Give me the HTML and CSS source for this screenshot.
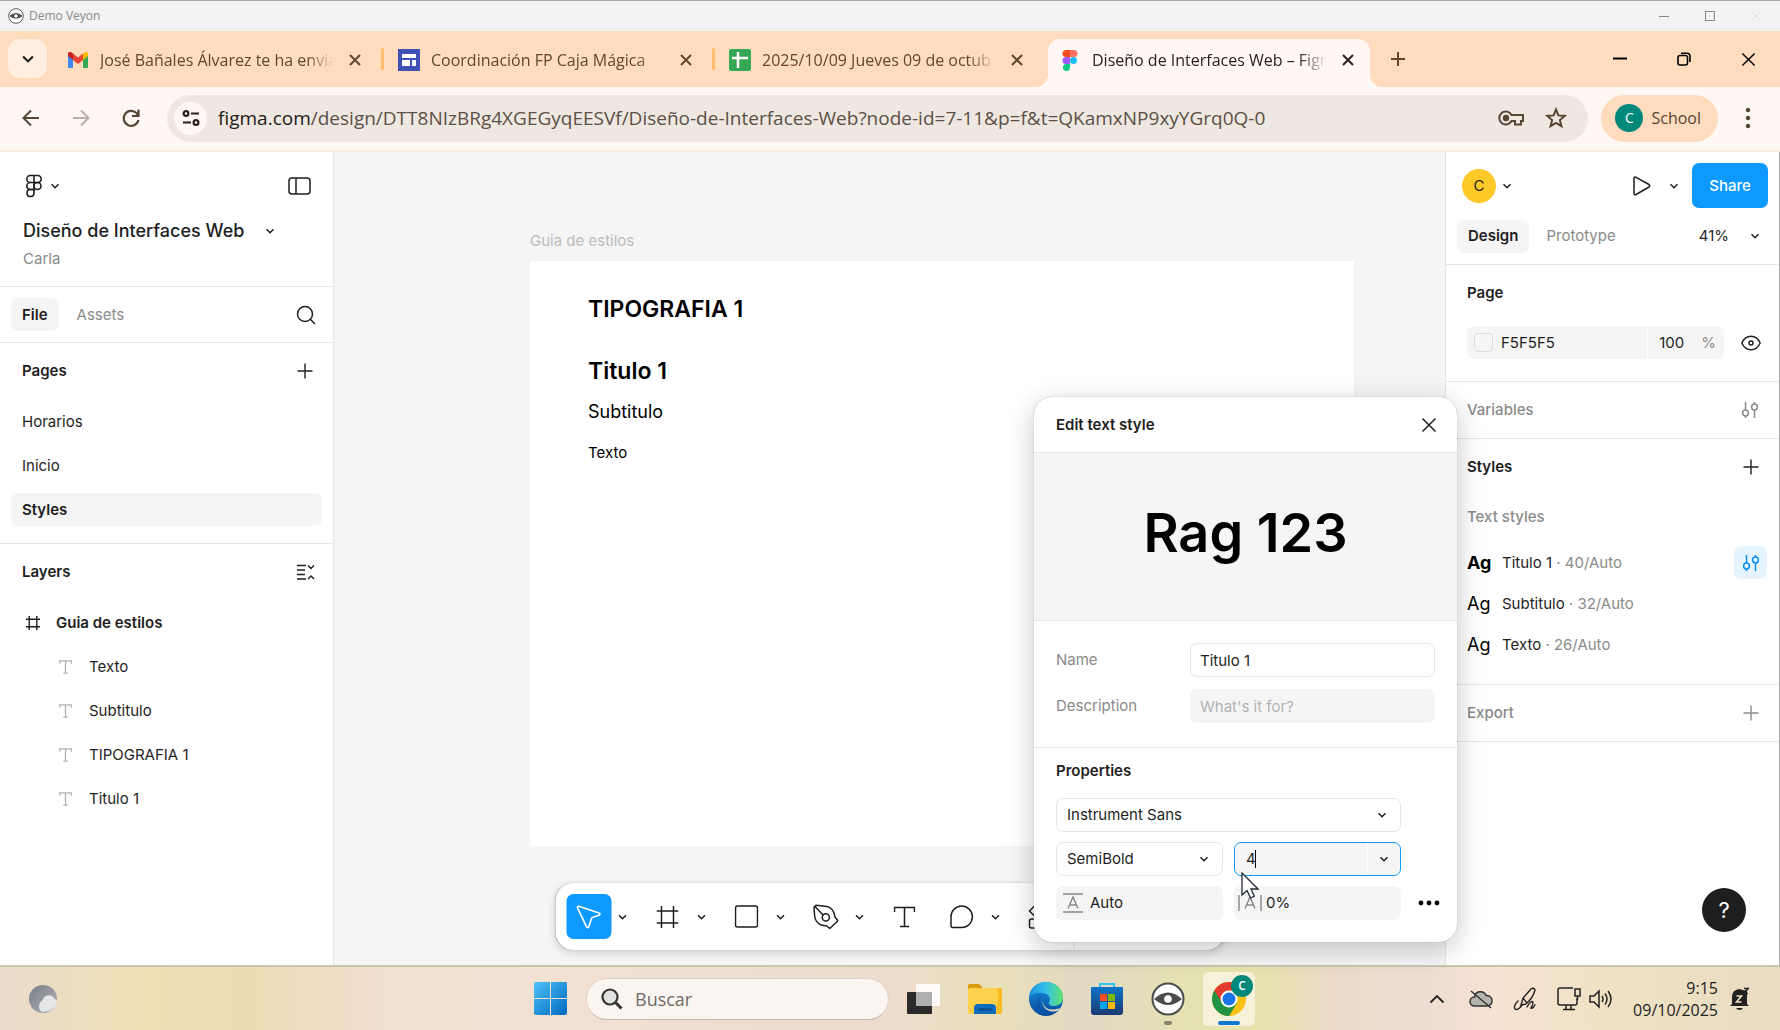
FILE: index.html
```html
<!DOCTYPE html>
<html lang="es">
<head>
<meta charset="utf-8">
<meta name="viewport" content="width=device-width, initial-scale=1">
<title>Diseño de Interfaces Web – Figma</title>
<link rel="stylesheet" href="styles.css">
</head>
<body>
<svg class="defs" aria-hidden="true">
  <symbol id="chev" viewBox="0 0 10 10"><path d="M1.5 3.2 5 6.7 8.500 3.200" fill="none" stroke="currentColor" stroke-width="1.500"/></symbol>
  <symbol id="close" viewBox="0 0 12 12"><path d="M1 1 11 11M11 1 1 11" fill="none" stroke="currentColor" stroke-width="2"/></symbol>
  <symbol id="thinx" viewBox="0 0 16 16"><path d="M1.500 1.500 14.500 14.500M14.500 1.500 1.500 14.500" fill="none" stroke="currentColor" stroke-width="1.500"/></symbol>
  <symbol id="plus" viewBox="0 0 16 16"><path d="M8 .5v15M.5 8h15" fill="none" stroke="currentColor" stroke-width="1.400"/></symbol>
  <symbol id="layer-t" viewBox="0 0 13 14"><path d="M.7 3.500V.8h11.600v2.700M6.500.8v12.400M4.300 13.200h4.400" fill="none" stroke="currentColor" stroke-width="1.300"/></symbol>
  <symbol id="sliders" viewBox="0 0 18 18"><g fill="none" stroke="currentColor" stroke-width="1.500"><path d="M4.500 1v8M4.500 15v2M13.500 1v2M13.500 9v8"/><circle cx="4.500" cy="12" r="2.900"/><circle cx="13.500" cy="6" r="2.900"/></g></symbol>
  <symbol id="frame" viewBox="0 0 22 22"><path d="M5 0v22M17 0v22M0 5h22M0 17h22" fill="none" stroke="currentColor" stroke-width="1.500"/></symbol>
  <symbol id="veyon" viewBox="0 0 34 34"><circle cx="17" cy="17" r="15.500" fill="#fff" stroke="#4b4b4b" stroke-width="2"/><path d="M3 17q14-13 28 0q-14 12-28 0z" fill="#4b4b4b"/><circle cx="17" cy="17" r="3.800" fill="#fff"/></symbol>
</svg>

<header class="titlebar">
  <svg class="app-mark" viewBox="0 0 34 34"><use href="#veyon"/></svg>
  <span class="app-name">Demo Veyon</span>
  <div class="title-controls">
    <button aria-label="Minimizar"><svg width="10" height="10"><path d="M0 5.500h10" stroke="#888"/></svg></button>
    <button aria-label="Maximizar"><svg width="10" height="10"><rect x=".5" y=".5" width="9" height="9" fill="none" stroke="#888"/></svg></button>
    <button class="dim" aria-label="Cerrar"><svg width="10" height="10"><path d="M0 0 10 10M10 0 0 10" stroke="#ddd"/></svg></button>
  </div>
</header>

<nav class="tabstrip" aria-label="Pestañas">
  <button class="tab-search" aria-label="Buscar pestañas"><svg width="14" height="14" viewBox="0 0 10 10"><use href="#chev"/></svg></button>
  <div class="tab">
    <svg class="favicon" viewBox="0 0 22 22"><path d="M1 5v13a1 1 0 0 0 1 1h4V9z" fill="#4285f4"/><path d="M21 5v13a1 1 0 0 1-1 1h-4V9z" fill="#34a853"/><path d="M16 5v6l5-4V5c0-2-2-2.500-3.500-1.500z" fill="#fbbc04"/><path d="M6 4.500 11 8.500 16 4.500V11l-5 4-5-4z" fill="#ea4335"/><path d="M1 5v2l5 4V4.500L4.500 3.500C3 2.500 1 3 1 5z" fill="#c5221f"/></svg>
    <span class="tab-title">José Bañales Álvarez te ha envia</span>
    <button class="tab-close" aria-label="Cerrar pestaña"><svg width="12" height="12"><use href="#close"/></svg></button>
  </div>
  <div class="tab">
    <svg class="favicon" viewBox="0 0 22 22"><path d="M0 0h22v22H0z" fill="#3f51b5"/><path d="M4 5h14v4H4zM4 11h8v6H4zM14 11h4v6h-4z" fill="#fff"/></svg>
    <span class="tab-title">Coordinación FP Caja Mágica</span>
    <button class="tab-close" aria-label="Cerrar pestaña"><svg width="12" height="12"><use href="#close"/></svg></button>
  </div>
  <div class="tab">
    <svg class="favicon" viewBox="0 0 22 22"><rect width="22" height="22" rx="2" fill="#34a853"/><path d="M3 9h16M9 3v16" stroke="#fff" stroke-width="2.600"/></svg>
    <span class="tab-title">2025/10/09 Jueves 09 de octub</span>
    <button class="tab-close" aria-label="Cerrar pestaña"><svg width="12" height="12"><use href="#close"/></svg></button>
  </div>
  <div class="tab active">
    <svg class="favicon" viewBox="0 0 22 22"><path d="M7 1h4v7H7a3.500 3.500 0 0 1 0-7z" fill="#f24e1e"/><path d="M11 1h4a3.500 3.500 0 0 1 0 7h-4z" fill="#ff7262"/><path d="M7 8h4v7H7a3.500 3.500 0 0 1 0-7z" fill="#a259ff"/><circle cx="14.500" cy="11.500" r="3.500" fill="#1abcfe"/><path d="M7 15h4v3.500A3.500 3.500 0 1 1 7 15z" fill="#0acf83"/></svg>
    <span class="tab-title">Diseño de Interfaces Web – Figm</span>
    <button class="tab-close" aria-label="Cerrar pestaña"><svg width="12" height="12"><use href="#close"/></svg></button>
  </div>
  <button class="new-tab" aria-label="Nueva pestaña"><svg width="14" height="14" viewBox="0 0 14 14"><path d="M7 0v14M0 7h14" stroke="currentColor" stroke-width="2"/></svg></button>
  <div class="window-controls">
    <button aria-label="Minimizar"><svg width="14" height="14"><path d="M0 6.500h14" stroke="#000" stroke-width="2"/></svg></button>
    <button aria-label="Restaurar"><svg width="14" height="14" fill="none" stroke="#000" stroke-width="1.600"><rect x="1" y="3.500" width="9.500" height="9.500" rx="2"/><path d="M4 1.200h6a3 3 0 0 1 3 3V10"/></svg></button>
    <button aria-label="Cerrar"><svg width="15" height="15" viewBox="0 0 16 16"><use href="#thinx"/></svg></button>
  </div>
</nav>

<div class="browserbar">
  <button class="nav-btn" aria-label="Atrás"><svg width="20" height="20" fill="none" stroke="currentColor" stroke-width="2"><path d="M18 10H3M10 2.500 2.500 10l7.500 7.500"/></svg></button>
  <button class="nav-btn off" aria-label="Adelante"><svg width="20" height="20" fill="none" stroke="currentColor" stroke-width="2"><path d="M2 10h15M10 2.500l7.500 7.500-7.500 7.500"/></svg></button>
  <button class="nav-btn" aria-label="Recargar"><svg width="20" height="20" fill="none" stroke="currentColor" stroke-width="2.200"><path d="M17.500 12A7.500 7.500 0 1 1 15.500 5L17 7M17.500 1.500V8H11"/></svg></button>
  <div class="omnibox">
    <button class="tune" aria-label="Información del sitio"><svg width="18" height="18" fill="none" stroke="currentColor" stroke-width="2.200"><circle cx="4" cy="4.500" r="2.400"/><path d="M9 4.500h8M1 13.500h8"/><circle cx="14" cy="13.500" r="2.400"/></svg></button>
    <a class="url" href="#"><b>figma.com</b>/design/DTT8NIzBRg4XGEGyqEESVf/Diseño-de-Interfaces-Web?node-id=7-11&amp;p=f&amp;t=QKamxNP9xyYGrq0Q-0</a>
    <button class="omni-btn" aria-label="Contraseñas"><svg width="26" height="16" fill="none" stroke="currentColor" stroke-width="2"><path d="M13.500 5A6.500 6.500 0 1 0 13.500 11H17v3.500h6V11h2V5z"/><circle cx="8" cy="8" r="2.200" fill="currentColor"/></svg></button>
    <button class="omni-btn" aria-label="Añadir a favoritos"><svg width="22" height="22" fill="none" stroke="currentColor" stroke-width="2"><path d="M11 2.500 13.400 8.400l6.400.5-4.900 4.100 1.500 6.200L11 15.900l-5.400 3.300 1.500-6.200-4.900-4.100 6.400-.5z"/></svg></button>
  </div>
  <button class="profile"><span class="profile-dot">C</span>School</button>
  <button class="kebab" aria-label="Menú"><svg width="6" height="22"><circle cx="3" cy="3" r="2.200"/><circle cx="3" cy="11" r="2.200"/><circle cx="3" cy="19" r="2.200"/></svg></button>
</div>

<main class="workspace">
  <aside class="left-panel">
    <section class="file-head">
      <div class="row between">
        <button class="logo-btn" aria-label="Menú principal"><svg width="18" height="24" fill="none" stroke="currentColor" stroke-width="1.600"><path d="M9 1.500H5.300a3.500 3.500 0 0 0 0 7H9zM9 1.500h3.700a3.500 3.500 0 0 1 0 7H9zM9 8.500H5.300a3.500 3.500 0 0 0 0 7H9z"/><circle cx="12.500" cy="12" r="3.500"/><path d="M9 15.500H5.300a3.500 3.500 0 1 0 3.700 3.500z"/></svg><svg width="10" height="10"><use href="#chev"/></svg></button>
        <button aria-label="Ocultar panel"><svg width="24" height="18" fill="none" stroke="currentColor" stroke-width="1.500"><rect x="1" y="1" width="21" height="16" rx="3"/><path d="M8 1v16"/></svg></button>
      </div>
      <h1 class="file-name">Diseño de Interfaces Web <svg width="10" height="10"><use href="#chev"/></svg></h1>
      <p class="muted owner">Carla</p>
    </section>
    <section class="file-tabs">
      <button class="pill on">File</button><button class="pill">Assets</button>
      <button class="push" aria-label="Buscar"><svg width="20" height="20" fill="none" stroke="currentColor" stroke-width="1.500"><circle cx="9" cy="9" r="7.500"/><path d="m14.300 14.300 4.700 4.700"/></svg></button>
    </section>
    <section class="pages">
      <div class="row between section-head"><h2>Pages</h2><button aria-label="Añadir página"><svg width="16" height="16"><use href="#plus"/></svg></button></div>
      <ul class="page-list">
        <li><a href="#">Horarios</a></li>
        <li><a href="#">Inicio</a></li>
        <li><a href="#" class="current">Styles</a></li>
      </ul>
    </section>
    <section class="layers">
      <div class="row between section-head"><h2>Layers</h2><button aria-label="Contraer capas"><svg width="18" height="16" fill="none" stroke="currentColor" stroke-width="1.400"><path d="M0 1.500h9M0 6h8M0 10.500h8M0 15h9M11 1.500l3 3 3-3M11 15l3-3 3 3"/></svg></button></div>
      <ul class="layer-list">
        <li class="root"><svg width="14" height="14" viewBox="0 0 22 22"><path d="M5 0v22M17 0v22M0 5h22M0 17h22" fill="none" stroke="currentColor" stroke-width="2.200"/></svg>Guia de estilos</li>
        <li><svg width="13" height="14"><use href="#layer-t"/></svg>Texto</li>
        <li><svg width="13" height="14"><use href="#layer-t"/></svg>Subtitulo</li>
        <li><svg width="13" height="14"><use href="#layer-t"/></svg>TIPOGRAFIA 1</li>
        <li><svg width="13" height="14"><use href="#layer-t"/></svg>Titulo 1</li>
      </ul>
    </section>
  </aside>

  <section class="canvas" aria-label="Lienzo">
    <span class="frame-label">Guia de estilos</span>
    <article class="artboard">
      <p class="t-tipografia">TIPOGRAFIA 1</p>
      <p class="t-titulo">Titulo 1</p>
      <p class="t-subtitulo">Subtitulo</p>
      <p class="t-texto">Texto</p>
    </article>
    <div class="toolbar" role="toolbar">
      <button class="tool active" aria-label="Mover"><svg width="26" height="26" fill="none" stroke="currentColor" stroke-width="1.600" stroke-linejoin="round"><path d="M3.400 2.200 23.500 9q2 1 0 2.200L17.500 13.300q-1.200.4-1.700 1.600l-2.600 8q-.9 1.700-2 .2L1.900 3.700q-.2-1.600 1.500-1.500z"/></svg></button>
      <button class="more" aria-label="Más"><svg width="10" height="10"><use href="#chev"/></svg></button>
      <button class="tool" aria-label="Marco"><svg width="22" height="22"><use href="#frame"/></svg></button>
      <button class="more" aria-label="Más"><svg width="10" height="10"><use href="#chev"/></svg></button>
      <button class="tool" aria-label="Rectángulo"><svg width="24" height="24"><rect x="1" y="1" width="22" height="21" rx="2" fill="none" stroke="currentColor" stroke-width="1.500"/></svg></button>
      <button class="more" aria-label="Más"><svg width="10" height="10"><use href="#chev"/></svg></button>
      <button class="tool" aria-label="Pluma"><svg width="26" height="26" fill="none" stroke="currentColor" stroke-width="1.500" stroke-linejoin="round"><path d="M1.500 3 3.500 1.200 14.500 2.500q5 1.200 7 6.500L22.500 13l3 3.700-8.300 7.800-3-2.500-5.700-1Q3 18.500 2.200 12.500zM2 2l9 9.500"/><circle cx="13.300" cy="13.300" r="3.600"/></svg></button>
      <button class="more" aria-label="Más"><svg width="10" height="10"><use href="#chev"/></svg></button>
      <button class="tool text" aria-label="Texto"><svg width="22" height="22" fill="none" stroke="currentColor" stroke-width="1.500"><path d="M1 6V1.500h20V6M11 1.500v19M6.500 20.500h9"/></svg></button>
      <button class="tool" aria-label="Comentario"><svg width="24" height="24" fill="none" stroke="currentColor" stroke-width="1.500"><path d="M1.500 12A10.700 10.700 0 1 1 12 22.500H3.500a2 2 0 0 1-2-2z"/></svg></button>
      <button class="more" aria-label="Más"><svg width="10" height="10"><use href="#chev"/></svg></button>
      <button class="tool" aria-label="Acciones"><svg width="26" height="26" fill="none" stroke="currentColor" stroke-width="1.500"><path d="M2 7 7 2l5 5-5 5z"/><rect x="2" y="15" width="9" height="9" rx="2"/><rect x="15" y="15" width="9" height="9" rx="2"/><rect x="15" y="3" width="9" height="9" rx="2"/></svg></button>
      <span class="tool-divider"></span>
    </div>
  </section>

  <aside class="right-panel">
    <div class="share-row">
      <button class="avatar-btn"><span class="avatar">C</span><svg width="10" height="10"><use href="#chev"/></svg></button>
      <button class="push" aria-label="Presentar"><svg width="18" height="20" fill="none" stroke="currentColor" stroke-width="1.500" stroke-linejoin="round"><path d="M1 2.500q0-2 2-1.200l13 7.200q1.500 1.300 0 2.500l-13 7.500q-2 .8-2-1.200z"/></svg></button>
      <button class="play-more" aria-label="Opciones"><svg width="10" height="10"><use href="#chev"/></svg></button>
      <button class="share">Share</button>
    </div>
    <div class="mode-row">
      <button class="pill on">Design</button><button class="pill">Prototype</button>
      <button class="push zoom">41%<svg width="10" height="10"><use href="#chev"/></svg></button>
    </div>
    <section class="page-props">
      <h2>Page</h2>
      <div class="row between">
        <div class="color-field">
          <span class="swatch"></span>
          <input class="hex" aria-label="Color" value="F5F5F5">
          <input class="opacity" aria-label="Opacidad" value="100"><span class="muted percent">%</span>
        </div>
        <button aria-label="Visibilidad"><svg width="20" height="16" fill="none" stroke="currentColor" stroke-width="1.500"><path d="M.8 8Q4 1.200 10 1.200T19.200 8Q16 14.800 10 14.800T.8 8z"/><circle cx="10" cy="8" r="2"/></svg></button>
      </div>
    </section>
    <section class="single muted"><h2>Variables</h2><button aria-label="Variables"><svg width="18" height="18"><use href="#sliders"/></svg></button></section>
    <section class="styles">
      <div class="single"><h2>Styles</h2><button aria-label="Añadir estilo"><svg width="16" height="16"><use href="#plus"/></svg></button></div>
      <h3 class="muted">Text styles</h3>
      <ul>
        <li><span class="ag bold">Ag</span><span>Titulo 1 <i>· 40/Auto</i></span><button class="edit" aria-label="Editar estilo"><svg width="18" height="18"><use href="#sliders"/></svg></button></li>
        <li><span class="ag">Ag</span><span>Subtitulo <i>· 32/Auto</i></span></li>
        <li><span class="ag">Ag</span><span>Texto <i>· 26/Auto</i></span></li>
      </ul>
    </section>
    <section class="single muted export"><h2>Export</h2><button aria-label="Añadir exportación"><svg width="16" height="16"><use href="#plus"/></svg></button></section>
    <button class="help" aria-label="Ayuda">?</button>
  </aside>

  <form class="dialog" role="dialog" aria-label="Edit text style">
    <header class="dialog-head"><h2>Edit text style</h2><button type="button" aria-label="Cerrar"><svg width="16" height="16"><use href="#thinx"/></svg></button></header>
    <div class="preview">Rag 123</div>
    <div class="dialog-fields">
      <label for="style-name">Name</label><input id="style-name" value="Titulo 1">
      <label for="style-desc">Description</label><input id="style-desc" class="filled" placeholder="What's it for?">
    </div>
    <div class="dialog-props">
      <h2>Properties</h2>
      <div class="select wide"><select aria-label="Fuente"><option>Instrument Sans</option></select><svg width="10" height="10"><use href="#chev"/></svg></div>
      <div class="select"><select aria-label="Grosor"><option>SemiBold</option></select><svg width="10" height="10"><use href="#chev"/></svg></div>
      <div class="size-field"><input aria-label="Tamaño" value="4"><span class="caret"></span><button type="button" aria-label="Tamaños"><svg width="10" height="10"><use href="#chev"/></svg></button></div>
      <label class="metric leading"><svg width="20" height="20" fill="none" stroke="#888" stroke-width="1.400"><path d="M0 1h20M0 19h20M5 15.500 10 4l5 11.500M6.700 12h6.600"/></svg><input aria-label="Interlineado" value="Auto"></label>
      <label class="metric tight"><svg width="24" height="18" fill="none" stroke="#888" stroke-width="1.400"><path d="M1 1v16M23 1v16M7 14.500 12 3l5 11.500M8.700 11h6.600"/></svg><input aria-label="Espaciado" value="0%"></label>
      <button class="dots" type="button" aria-label="Más opciones"><svg width="22" height="6"><circle cx="3" cy="3" r="2.400"/><circle cx="11" cy="3" r="2.400"/><circle cx="19" cy="3" r="2.400"/></svg></button>
    </div>
    <svg class="cursor" width="18" height="28" viewBox="0 0 18 28"><path d="M1 1v22l5-4.500 3.500 7.500 3.800-1.800-3.300-7.200h7z" fill="#fff" stroke="#222a3a" stroke-width="1.300"/></svg>
  </form>
</main>

<footer class="taskbar">
  <button class="weather" aria-label="El tiempo"><svg width="30" height="30"><defs><linearGradient id="moon" x1="0" y1="0" x2="1" y2="1"><stop stop-color="#777c84"/><stop offset="1" stop-color="#b3b6ba"/></linearGradient></defs><circle cx="15" cy="15" r="14" fill="url(#moon)"/><path d="M14 28a7 7 0 0 1 1-12 6 6 0 0 1 10-3l4 4q-1 10-15 11z" fill="#e6e6e6"/></svg></button>
  <div class="apps">
    <button class="app" aria-label="Inicio"><svg width="34" height="34"><defs><linearGradient id="win" x1="0" y1="0" x2="1" y2="1"><stop stop-color="#4fc3f7"/><stop offset="1" stop-color="#0067c0"/></linearGradient></defs><path d="M0 2q0-2 2-2h14v16H0zM17 0h15q1 0 1 2v14H17zM0 17h16v16H2q-2 0-2-2zM17 17h16v14q0 2-2 2H17z" fill="url(#win)"/></svg></button>
    <label class="search"><svg width="22" height="22" fill="none" stroke="#333" stroke-width="2.200"><circle cx="9" cy="9" r="7.500" fill="#e2e2e0"/><path d="m14.500 14.500 6 6" stroke-width="3"/></svg><input placeholder="Buscar" aria-label="Buscar"></label>
    <button class="app" aria-label="Vista de tareas"><svg width="34" height="32"><rect y="9" width="25" height="22" rx="1" fill="#2b2b2b"/><rect x="9" y="1" width="24" height="22" rx="1" fill="#fff" fill-opacity=".86"/><path d="M9 9h16v14H9z" fill="#b0b0b0"/></svg></button>
    <button class="app" aria-label="Explorador"><svg width="34" height="32"><path d="M0 3q0-2 2-2h9l3 3v4H0z" fill="#d99a0e"/><rect y="5" width="34" height="26" rx="2" fill="#ffd04a"/><path d="M30 5h2q2 0 2 2v22q0 2-2 2h-3z" fill="#f9bb20"/><path d="M6 31v-6q0-4 4-4h14q4 0 4 4v6z" fill="#0f6cbd"/><path d="M10 26.500h14" stroke="#0b4a86" stroke-width="2"/></svg></button>
    <button class="app" aria-label="Edge"><svg width="34" height="34"><defs><linearGradient id="ea" x1="0" y1="0" x2="1" y2="0"><stop stop-color="#1b8fe0"/><stop offset=".5" stop-color="#35c1e8"/><stop offset="1" stop-color="#5fe36d"/></linearGradient><linearGradient id="eb" x1="0" y1="0" x2="0" y2="1"><stop stop-color="#1390e0"/><stop offset="1" stop-color="#0c4a9a"/></linearGradient></defs><circle cx="17" cy="17" r="17" fill="url(#eb)"/><path d="M0 15C1 5 9 0 17 0c10 0 17 7 17 15 0 6-4 9-9 9-4 0-6-2-5-4 2-2 1-8-6-9C8 10 3 12 0 15z" fill="url(#ea)"/><path d="M14 18c-1 8 7 12 17 8q-1 2-3 3c-9 2-16-4-14-11z" fill="#ebe0c2"/><path d="M14 12c-5 3-6 15 5 21C8 33 4 20 14 12z" fill="#0a55a8"/></svg></button>
    <button class="app" aria-label="Store"><svg width="34" height="34"><defs><linearGradient id="st" x1="0" y1="0" x2="0" y2="1"><stop stop-color="#0f75c8"/><stop offset="1" stop-color="#1b3a70"/></linearGradient></defs><path d="M10 8V2h14v6" fill="none" stroke="#36c2f0" stroke-width="2"/><path d="M1 5h32v25q0 3-3 3H4q-3 0-3-3z" fill="url(#st)"/><path d="M10 12h7v7h-7z" fill="#f25022"/><path d="M18 12h7v7h-7z" fill="#7fba00"/><path d="M10 20h7v7h-7z" fill="#00a4ef"/><path d="M18 20h7v7h-7z" fill="#ffb900"/></svg></button>
    <button class="app running" aria-label="Veyon"><svg width="34" height="34"><use href="#veyon"/></svg></button>
    <button class="app focused" aria-label="Chrome"><svg width="34" height="34"><circle cx="17" cy="17" r="17" fill="#fbc116"/><path d="M17 17 2.300 8.500A17 17 0 0 0 17 34l8-13z" fill="#229342"/><path d="M2.300 8.500A17 17 0 0 1 31.700 8.500H17l-7 12z" fill="#e33b2e"/><circle cx="17" cy="17" r="8.500" fill="#fff"/><circle cx="17" cy="17" r="6.500" fill="#1a73e8"/></svg><span class="badge">C</span></button>
  </div>
  <div class="tray">
    <button class="overflow" aria-label="Iconos ocultos"><svg width="16" height="10"><path d="M1.500 8.500 8 2l6.500 6.500" fill="none" stroke="currentColor" stroke-width="1.800"/></svg></button>
    <button aria-label="OneDrive"><svg width="24" height="20" fill="none" stroke="#333" stroke-width="1.500"><path d="M5.500 17a4.500 4.500 0 0 1 0-9A6 6 0 0 1 17 6.500a5 5 0 0 1 1.500 10.500z" fill="#b5b5ae"/><path d="M2 2l20 17"/></svg></button>
    <button aria-label="Lápiz"><svg width="24" height="26" fill="none" stroke="#222" stroke-width="1.400" stroke-linecap="round"><path d="M8 19 10 12 18 3q3-2 4 1-2 8-9 14zM10 12l4 5M5 15q-5 5-3 8 3 2 7-4M14 21q4-7 6-5 0 4-2 6 2 1 4-3"/></svg></button>
    <button aria-label="Red"><svg width="24" height="24" fill="none" stroke="#222" stroke-width="1.500"><path d="M16 1H3Q1 1 1 3v13q0 2 2 2h15q2 0 2-2v-5M6 22.500h12M9 18v4M14 18v4M18 2h5v7h-5zM20.500 9v4"/></svg></button>
    <button class="volume" aria-label="Volumen"><svg width="24" height="22" fill="none" stroke="#222" stroke-width="1.500"><path d="M1 8h4l5-5v16l-5-5H1zM13 8q2 3 0 6M16 5.500q4 5.500 0 11M19 3q6 8 0 16"/></svg></button>
    <time class="clock">9:15<br>09/10/2025</time>
    <button class="bell" aria-label="Notificaciones"><svg width="22" height="24"><path d="M2 17V10q0-7 7-8l8 2v13l2 2H0zM6 21h7q-1 2-3.500 2T6 21z" fill="#222"/><path d="M6.500 9h5l-5 6h5" fill="none" stroke="#efe0c4" stroke-width="1.600"/><path d="M14 1.500h4l-4 5h4" fill="none" stroke="#222" stroke-width="1.600"/></svg></button>
  </div>
</footer>
</body>
</html>
```
FILE: styles.css
```css
* { box-sizing: border-box; }

body {
  margin: 0;
  min-height: 100vh;
  display: flex;
  flex-direction: column;
  background: #f5f5f5;
  color: #1e1e1e;
  font: 15px/20px Inter, "Liberation Sans", sans-serif;
}

button, input, select { font: inherit; color: inherit; }
button {
  display: inline-flex;
  align-items: center;
  justify-content: center;
  padding: 0;
  border: 0;
  background: none;
}
input, select { min-width: 0; border: 0; background: none; outline: 0; }
h1, h2, h3, p, ul { margin: 0; padding: 0; font: inherit; }
h2 { font-weight: 600; }
ul { list-style: none; }
a { color: inherit; text-decoration: none; }
svg { display: block; flex: none; }

.defs { position: absolute; width: 0; height: 0; }
.row { display: flex; align-items: center; }
.between { justify-content: space-between; }
.muted { color: #8a8a8a; }
.push { margin-left: auto; }

/* Outer window */
.titlebar {
  display: flex;
  align-items: center;
  height: 31px;
  padding: 0 8px;
  border-top: 1px solid #a9a9a9;
  background: #f3f3f3;
  color: #8a8a8a;
  font: 12px/16px "Open Sans", sans-serif;
}
.app-mark { width: 16px; height: 16px; margin-right: 5px; }
.title-controls { display: flex; margin-left: auto; }
.title-controls button { width: 32px; height: 24px; margin-left: 14px; }
.dim { opacity: .8; }

/* Browser tabs */
.tabstrip {
  display: flex;
  align-items: center;
  height: 56px;
  padding: 8px 0 0 8px;
  background: #ffdcbd;
  color: #60482f;
  font: 16px/24px "Open Sans", sans-serif;
}
.tab-search {
  width: 39px;
  height: 39px;
  margin: 0 6px 9px 0;
  border-radius: 12px;
  background: #ffeee0;
  color: #1e1a17;
}
.tab {
  position: relative;
  display: flex;
  align-items: center;
  flex: 0 1 331px;
  min-width: 0;
  height: 48px;
  padding: 0 19px 6px 14px;
}
.tab + .tab:not(.active)::before {
  content: "";
  position: absolute;
  left: -3px;
  top: 9px;
  width: 3px;
  height: 22px;
  border-radius: 2px;
  background: #ffbb70;
}
.favicon { width: 22px; height: 22px; margin-right: 11px; }
.tab-title {
  flex: 1;
  min-width: 0;
  overflow: hidden;
  white-space: nowrap;
  -webkit-mask-image: linear-gradient(to right, #000 88%, transparent);
  mask-image: linear-gradient(to right, #000 88%, transparent);
}
.tab-close { width: 20px; height: 20px; margin-left: 11px; }
.tab.active {
  margin-left: 2px;
  flex-basis: 322px;
  padding: 0 12px 6px 11px;
  border-radius: 12px 12px 0 0;
  background: #fff7f4;
  color: #292320;
}
.tab.active::before, .tab.active::after {
  content: "";
  position: absolute;
  bottom: 0;
  width: 12px;
  height: 12px;
}
.tab.active::before { left: -12px; background: radial-gradient(circle at 0 0, transparent 12px, #fff7f4 12px); }
.tab.active::after { right: -12px; background: radial-gradient(circle at 100% 0, transparent 12px, #fff7f4 12px); }
.new-tab { width: 32px; height: 32px; margin: 0 0 8px 12px; }
.window-controls { display: flex; margin-left: auto; color: #000; }
.window-controls button { width: 64px; height: 40px; margin-bottom: 8px; }

/* Browser toolbar */
.browserbar {
  display: flex;
  align-items: center;
  height: 65px;
  padding: 0 20px 1px 6px;
  border-bottom: 2px solid #faebe3;
  background: #fff7f4;
  color: #584634;
  font: 19px/24px "Open Sans", sans-serif;
}
.nav-btn { width: 50px; height: 40px; }
.nav-btn.off { color: #b9b0aa; }
.omnibox {
  display: flex;
  align-items: center;
  flex: 1;
  min-width: 0;
  height: 47px;
  margin-left: 11px;
  padding: 0 14px 0 7px;
  border-radius: 24px;
  background: #efe7e2;
}
.tune { width: 33px; height: 33px; border-radius: 50%; background: #fff7f4; color: #29231e; }
.url { flex: 1; min-width: 0; margin-left: 11px; overflow: hidden; white-space: nowrap; color: #5c5047; }
.url b { font-weight: 400; color: #1f1b18; }
.omni-btn { width: 36px; height: 36px; margin-left: 9px; }
.profile {
  gap: 8px;
  height: 47px;
  margin-left: 13px;
  padding: 0 17px 0 14px;
  border-radius: 24px;
  background: #ffdcbd;
  font-size: 16px;
}
.profile-dot, .badge {
  display: grid;
  place-items: center;
  border-radius: 50%;
  background: #00897b;
  color: #fff;
}
.profile-dot { width: 28px; height: 28px; font-size: 14px; }
.kebab { width: 24px; height: 40px; margin-left: 18px; fill: currentColor; }

/* Editor */
.workspace { position: relative; display: flex; flex: 1; min-height: 0; }
.left-panel {
  display: flex;
  flex-direction: column;
  flex: 0 0 334px;
  border-right: 1px solid #e6e6e6;
  background: #fff;
}
.left-panel > section { border-bottom: 1px solid #e6e6e6; }
.left-panel > .layers { border-bottom: 0; }
.file-head { padding: 22px 21px 17px 23px; }
.logo-btn { gap: 7px; padding-left: 2px; }
.file-name {
  display: flex;
  align-items: center;
  gap: 21px;
  margin-top: 20px;
  font-size: 18px;
  font-weight: 500;
  line-height: 26px;
}
.owner { margin-top: 5px; }
.file-tabs { display: flex; align-items: center; gap: 7px; height: 56px; padding: 0 17px 0 11px; }
.pill { height: 33px; padding: 0 11px; border-radius: 7px; color: #8a8a8a; }
.pill.on { background: #f5f5f5; color: #1e1e1e; font-weight: 600; }
.section-head { height: 56px; padding: 0 20px 0 22px; }
.layers .section-head { padding-right: 18px; }
.pages { padding-bottom: 17px; }
.page-list, .layer-list { display: flex; flex-direction: column; gap: 11px; padding: 6px 11px 0; }
.page-list a { display: flex; align-items: center; height: 33px; padding: 0 11px; border-radius: 7px; }
.page-list .current { background: #f5f5f5; font-weight: 600; }
.layer-list li { display: flex; align-items: center; gap: 17px; height: 33px; padding-left: 48px; }
.layer-list li svg { color: #b0b0b0; }
.layer-list .root { gap: 16px; padding-left: 15px; font-weight: 600; }
.layer-list .root svg { color: #1e1e1e; }

/* Canvas: frame and its text layers sit at free coordinates */
.canvas { position: relative; flex: 1; min-width: 0; overflow: hidden; background: #f5f5f5; }
.frame-label { position: absolute; left: 196px; top: 79px; color: #bcbcbc; }
.artboard { position: absolute; left: 196px; top: 109px; width: 824px; height: 585px; background: #fff; color: #000; }
.artboard p { position: absolute; left: 58px; white-space: nowrap; }
.t-tipografia { top: 32px; font-size: 23px; line-height: 32px; font-weight: 600; }
.t-titulo { top: 94px; font-size: 23px; line-height: 32px; font-weight: 600; }
.t-subtitulo { top: 139px; font-size: 18px; line-height: 24px; }
.t-texto { top: 182px; }

.toolbar {
  position: absolute;
  left: 50%;
  bottom: 15px;
  transform: translateX(-50%);
  display: flex;
  align-items: center;
  width: 669px;
  height: 67px;
  padding: 0 11px;
  border-radius: 18px;
  background: #fff;
  box-shadow: 0 0 1px rgba(0, 0, 0, .35), 0 3px 10px rgba(0, 0, 0, .15);
}
.tool { width: 45px; height: 45px; border-radius: 7px; }
.tool.active { background: #0d99ff; color: #fff; }
.more { width: 22px; height: 45px; margin-right: 12px; }
.tool.text { margin-right: 12px; }
.tool-divider { align-self: stretch; width: 1px; margin-left: 10px; background: #e6e6e6; }

/* Inspector */
.right-panel {
  display: flex;
  flex-direction: column;
  flex: 0 0 335px;
  border-left: 1px solid #e6e6e6;
  border-right: 1px solid #b0b0b0;
  background: #fff;
}
.share-row { display: flex; align-items: center; height: 45px; margin: 11px 11px 0 16px; }
.avatar-btn { gap: 6px; }
.avatar { display: grid; place-items: center; width: 34px; height: 34px; border-radius: 50%; background: #ffc928; }
.play-more { width: 24px; height: 24px; margin: 0 6px 0 11px; }
.share { width: 76px; height: 45px; border-radius: 7px; background: #0d99ff; color: #fff; font-weight: 500; }
.mode-row {
  display: flex;
  align-items: center;
  gap: 6px;
  height: 57px;
  padding: 0 19px 0 11px;
  border-bottom: 1px solid #e6e6e6;
}
.zoom { gap: 21px; }
.page-props { padding: 18px 18px 22px 21px; border-bottom: 1px solid #e6e6e6; }
.page-props .row { margin-top: 23px; }
.color-field {
  display: flex;
  align-items: center;
  width: 257px;
  height: 33px;
  padding: 0 8px 0 7px;
  border-radius: 7px;
  background: #f5f5f5;
}
.swatch { width: 19px; height: 19px; border: 1px solid #dcdcdc; border-radius: 4px; }
.hex { flex: 1; height: 33px; padding: 0 8px; border-right: 1px solid #fff; }
.opacity { width: 53px; height: 33px; padding: 0 11px; }
.single { display: flex; align-items: center; justify-content: space-between; height: 57px; padding: 0 20px 0 21px; }
section.single { border-bottom: 1px solid #e6e6e6; }
.single.muted h2 { font-weight: 500; }
.styles { padding-bottom: 19px; border-bottom: 1px solid #e6e6e6; }
.styles .single { height: 55px; }
.styles h3 { padding: 13px 21px 15px; font-weight: 500; }
.styles li { display: flex; align-items: center; height: 41px; padding: 0 12px 0 21px; }
.styles li i { color: #8a8a8a; font-style: normal; }
.ag { width: 35px; color: #000; font-size: 18px; }
.ag.bold { font-weight: 700; }
.edit { width: 33px; height: 33px; margin-left: auto; border-radius: 7px; background: #e5f4ff; color: #0d8ff0; }
.help {
  align-self: flex-end;
  width: 44px;
  height: 44px;
  margin: auto 33px 33px 0;
  border-radius: 50%;
  background: #1e1e1e;
  color: #fff;
  font-size: 22px;
}

/* Text style dialog, floating over canvas and inspector */
.dialog {
  position: absolute;
  right: 323px;
  top: 245px;
  width: 423px;
  border-radius: 18px;
  background: #fff;
  box-shadow: 0 0 1px rgba(0, 0, 0, .4), 0 7px 28px rgba(0, 0, 0, .22);
}
.dialog-head { display: flex; align-items: center; justify-content: space-between; height: 55px; padding: 0 20px 0 22px; }
.preview {
  display: grid;
  place-items: center;
  height: 169px;
  padding-bottom: 8px;
  border-top: 1px solid #e6e6e6;
  border-bottom: 1px solid #e6e6e6;
  background: #f5f5f5;
  color: #000;
  font-size: 54px;
  line-height: 68px;
  font-weight: 600;
}
.dialog-fields {
  display: grid;
  grid-template-columns: 134px 1fr;
  gap: 12px 0;
  align-items: center;
  padding: 22px 22px 24px;
  border-bottom: 1px solid #e6e6e6;
  color: #8a8a8a;
}
.dialog-fields input { height: 34px; padding: 0 9px; border: 1px solid #e6e6e6; border-radius: 7px; color: #1e1e1e; }
.dialog-fields .filled { border-color: #f5f5f5; background: #f5f5f5; }
.dialog-fields ::placeholder { color: #b3b3b3; opacity: 1; }
.dialog-props {
  display: grid;
  grid-template-columns: 167px 167px 1fr;
  gap: 10px 11px;
  padding: 13px 17px 22px 22px;
}
.dialog-props h2 { grid-column: 1 / -1; margin-bottom: 7px; }
.select { display: grid; align-items: center; height: 34px; border: 1px solid #e6e6e6; border-radius: 7px; }
.select > * { grid-area: 1 / 1; }
.select select { height: 32px; padding: 0 10px; appearance: none; }
.select svg { justify-self: end; margin-right: 13px; pointer-events: none; }
.select.wide { grid-column: span 2; }
.select.wide + .select, .leading { grid-column: 1; }
.size-field {
  position: relative;
  display: flex;
  height: 34px;
  border: 1px solid #0d99ff;
  border-radius: 7px;
  background: #f5f5f5;
}
.size-field input { flex: 1; padding: 0 11px; }
.size-field button { width: 33px; border-left: 1px solid #fff; }
.caret { position: absolute; left: 20px; top: 7px; width: 1px; height: 18px; background: #000; }
.metric { display: flex; align-items: center; gap: 7px; height: 34px; padding-left: 7px; border-radius: 7px; background: #f5f5f5; }
.metric input { width: 90px; padding: 0; }
.metric.tight { gap: 4px; padding-left: 4px; }
.dots { justify-self: end; }
.cursor { position: absolute; left: 207px; top: 475px; }

/* Desktop taskbar */
.taskbar {
  display: grid;
  grid-template-columns: 1fr auto 1fr;
  align-items: center;
  height: 65px;
  padding: 0 28px;
  border-top: 2px solid #cdc3b4;
  background: linear-gradient(to right, #e9dccb, #efdfb5 8%, #ecdcb4 14%, #f1dfd0 22%, #f2e0d3 32%, #eeddcf 44%, #eddcca 51%, #e9dfb8 56%, #e2d9c4 61%, #e6e4ae 68%, #e8e3ae 71%, #ecdac8 75%, #eedcd3 80%, #f6e3d2 84%, #efe1c2 91%, #e9dcc2);
  color: #222;
  font: 16px/22px "Open Sans", sans-serif;
}
.weather { justify-self: start; }
.apps { display: flex; align-items: center; gap: 9px; }
.app { position: relative; width: 52px; height: 54px; border-radius: 5px; }
.app.running::after, .app.focused::after {
  content: "";
  position: absolute;
  bottom: 1px;
  width: 8px;
  height: 4px;
  border-radius: 2px;
  background: #8a8270;
}
.app.focused { background: #f6f1d8; box-shadow: 0 0 1px #cfc8a8; }
.app.focused::after { width: 22px; background: #0a78d0; }
.badge { position: absolute; right: 2px; top: 3px; width: 22px; height: 22px; font-size: 12px; font-weight: 600; line-height: 22px; }
.search {
  display: flex;
  align-items: center;
  gap: 12px;
  width: 303px;
  height: 42px;
  padding: 0 14px;
  border: 1px solid #dfd2c8;
  border-bottom-color: #c5b8ae;
  border-radius: 21px;
  background: #faf5f1;
  font-size: 18px;
}
.search input { flex: 1; padding: 0; }
.search ::placeholder { color: #716b66; opacity: 1; }
.tray { display: flex; align-items: center; justify-content: flex-end; gap: 20px; }
.overflow { margin-right: 4px; }
.volume { margin-left: -12px; }
.clock { text-align: right; }
.bell { margin-left: -8px; }
```
